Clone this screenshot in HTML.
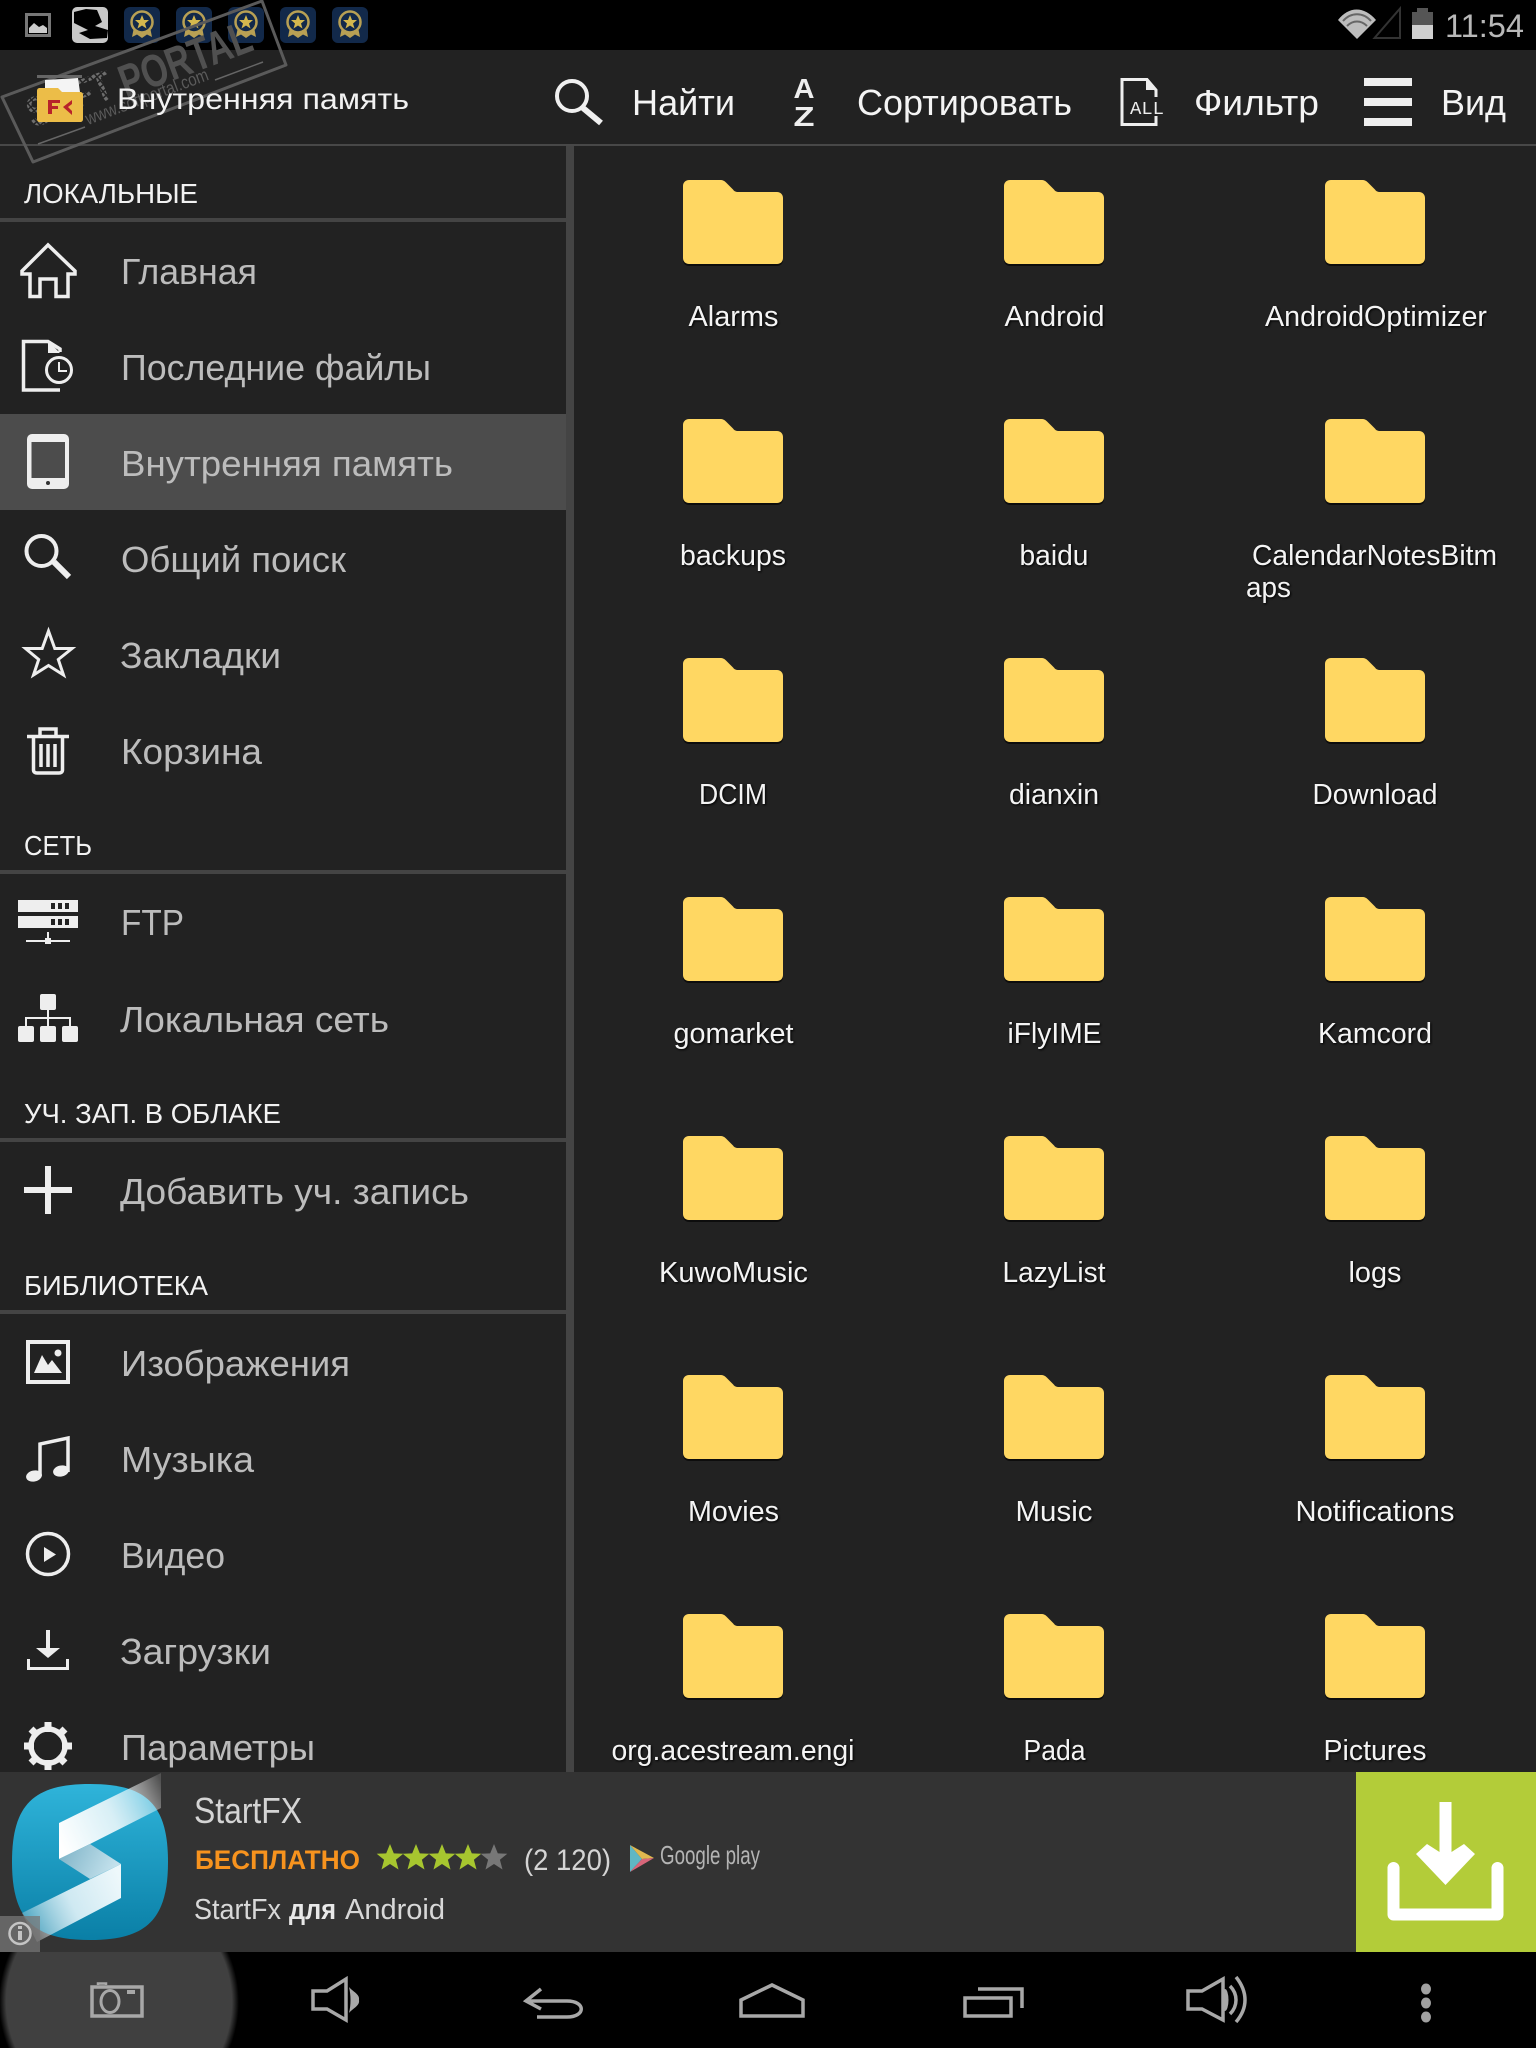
<!DOCTYPE html>
<html lang="ru">
<head>
<meta charset="utf-8">
<title>File Commander</title>
<style>
html,body{margin:0;padding:0;background:#222;width:1536px;height:2048px;overflow:hidden}
svg{display:block;position:absolute;left:0;top:0}
text{font-family:"Liberation Sans",sans-serif}
.side{font-size:36px;fill:#bcbcbc}
.sec{font-size:28px;fill:#f2f2f2}
.tb{font-size:36px;fill:#f4f4f4}
.fl{font-size:29px;fill:#f4f4f4;text-anchor:middle}
.ic{fill:none;stroke:#eee;stroke-width:4}
.nav{fill:none;stroke:#a8a8a8;stroke-width:3.500}
</style>
</head>
<body>
<svg width="1536" height="2048" viewBox="0 0 1536 2048" xmlns="http://www.w3.org/2000/svg">
<defs>
<g id="folder">
<path d="M6 1H37C40 1 41.500 2 43 3.500L50 10.500C51 11.800 52 13 55 13H94C97.500 13 100 15.500 100 19V79C100 82.500 97.500 85 94 85H6C2.500 85 0 82.500 0 79V7C0 3.500 2.500 1 6 1Z" fill="#000" opacity=".6" transform="translate(0,1)"/>
<path d="M6 0H37C40 0 41.500 1 43 2.500L50 9.500C51 10.800 52 12 55 12H94C97.500 12 100 14.500 100 18V78C100 81.500 97.500 84 94 84H6C2.500 84 0 81.500 0 78V6C0 2.500 2.500 0 6 0Z" fill="#ffd762"/>
</g>
<g id="badge">
<rect x="0" y="0" width="36" height="36" rx="6" fill="#12294a"/>
<path d="M10 20L8 30 13 27.500 18 31 23 27.500 28 30 26 20Z" fill="#b8a054"/>
<circle cx="18" cy="15" r="10.500" fill="#12294a" stroke="#b8a054" stroke-width="2.500"/>
<path d="M18 8L20 13H25L21 16.500 22.500 21.500 18 18.500 13.500 21.500 15 16.500 11 13H16Z" fill="#d4b84e"/>
</g>
<path id="star" d="M0-14L3.800-4.600 13.300-4.300 5.900 1.800 8.500 11.500 0 6 -8.500 11.500 -5.900 1.800 -13.300-4.300 -3.800-4.600Z"/>
<linearGradient id="blob" x1="0" y1="0" x2="0" y2="1"><stop offset="0" stop-color="#2fb4da"/><stop offset="1" stop-color="#0a7fa6"/></linearGradient>
<linearGradient id="b1" x1="59" y1="1840" x2="165" y2="1790" gradientUnits="userSpaceOnUse"><stop offset="0" stop-color="#fff"/><stop offset=".5" stop-color="#d8eff6"/><stop offset=".85" stop-color="#fff" stop-opacity=".42"/><stop offset="1" stop-color="#fff" stop-opacity=".15"/></linearGradient>
<linearGradient id="b2" x1="60" y1="1850" x2="110" y2="1875" gradientUnits="userSpaceOnUse"><stop offset="0" stop-color="#7fb4c8"/><stop offset="1" stop-color="#c3e1ec"/></linearGradient>
<linearGradient id="b3" x1="121" y1="1880" x2="22" y2="1925" gradientUnits="userSpaceOnUse"><stop offset="0" stop-color="#eef8fb"/><stop offset=".5" stop-color="#cfe9f2"/><stop offset="1" stop-color="#fff" stop-opacity=".2"/></linearGradient>
<pattern id="dots" width="5" height="5" patternUnits="userSpaceOnUse" patternTransform="rotate(-20)"><rect width="3.500" height="3.500" fill="#6e6e6e"/></pattern>
<radialGradient id="halo"><stop offset=".94" stop-color="#404040"/><stop offset="1" stop-color="#404040" stop-opacity="0"/></radialGradient>
</defs>

<!-- base -->
<rect width="1536" height="2048" fill="#222"/>
<rect width="1536" height="50" fill="#000"/>
<rect y="144" width="1536" height="2" fill="#484848"/>

<!-- status bar left -->
<g>
<rect x="26.500" y="14.500" width="23" height="21" fill="none" stroke="#777" stroke-width="3"/>
<path d="M29 33V28L34 23 39 27 43 25 47 28V33Z" fill="#ccc"/>
<rect x="72" y="7" width="36" height="36" rx="5" fill="#c8c8c8"/>
<path d="M74 12L86 9 97 10 102 22 95 26 108 30 107 38 90 39 79 33 88 30 80 26 74 23Z" fill="#000"/>
<use href="#badge" x="124" y="7"/>
<use href="#badge" x="176" y="7"/>
<use href="#badge" x="228" y="7"/>
<use href="#badge" x="280" y="7"/>
<use href="#badge" x="332" y="7"/>
</g>

<!-- status bar right -->
<path d="M1338 20C1349 6 1364 6 1376 20L1357 39Z" fill="#bdbdbd"/>
<path d="M1343 21C1351 12 1363 12 1371 21M1347 26C1353 20 1361 20 1367 26" fill="none" stroke="#666" stroke-width="2"/>
<path d="M1374.500 38L1400 8.500V38Z" fill="none" stroke="#333" stroke-width="2"/>
<rect x="1412" y="12" width="21" height="13" fill="#555"/>
<rect x="1417" y="8" width="11" height="4" fill="#555"/>
<rect x="1412" y="25" width="21" height="14" fill="#cfcfcf"/>
<text x="1445" y="37" font-size="32" fill="#b8b8b8" textLength="79" lengthAdjust="spacingAndGlyphs">11:54</text>

<!-- watermark -->
<g>
<path d="M2 97L262 1 286 65 33 162Z" fill="none" stroke="#5a5a5a" stroke-width="3" stroke-linejoin="round"/>
<text transform="rotate(-20.500 126 98)" x="126" y="98" font-size="46" font-weight="bold" fill="#505050" textLength="138" lengthAdjust="spacingAndGlyphs">PORTAL</text>
<text transform="rotate(-20.500 33 128)" x="33" y="128" font-size="42" font-weight="bold" fill="url(#dots)" textLength="89" lengthAdjust="spacingAndGlyphs">SOFT</text>
<text transform="rotate(-20.500 88 125)" x="88" y="125" font-size="18" fill="#5a5a5a" textLength="130" lengthAdjust="spacingAndGlyphs">www.softportal.com</text>
<path d="M38 144L85 127M215 80L263 62" stroke="#666" stroke-width="1.500" fill="none"/>
</g>

<!-- toolbar -->
<text x="117" y="109" font-size="30" fill="#f2f2f2" textLength="292" lengthAdjust="spacingAndGlyphs">Внутренняя память</text>
<circle cx="572" cy="96" r="15" fill="none" stroke="#f0f0f0" stroke-width="4"/>
<path d="M583 108L601 123" stroke="#f0f0f0" stroke-width="6" fill="none"/>
<text class="tb" x="632" y="115" textLength="103" lengthAdjust="spacingAndGlyphs">Найти</text>
<text x="804" y="98" font-size="28" font-weight="bold" fill="#eee" text-anchor="middle" textLength="21" lengthAdjust="spacingAndGlyphs">A</text>
<text x="804" y="126" font-size="28" font-weight="bold" fill="#eee" text-anchor="middle" textLength="21" lengthAdjust="spacingAndGlyphs">Z</text>
<text class="tb" x="857" y="115" textLength="215" lengthAdjust="spacingAndGlyphs">Сортировать</text>
<path d="M1156 116V124.500H1122V79.500H1147L1156 90V97" fill="none" stroke="#eee" stroke-width="3"/>
<path d="M1146 79.500V90H1156Z" fill="#eee"/>
<text x="1130" y="114" font-size="18" fill="#eee" textLength="34" lengthAdjust="spacingAndGlyphs" style="font-family:'Liberation Mono',monospace">ALL</text>
<text class="tb" x="1194" y="115" textLength="125" lengthAdjust="spacingAndGlyphs">Фильтр</text>
<rect x="1364" y="78" width="48" height="8" fill="#eee"/>
<rect x="1364" y="98" width="48" height="8" fill="#eee"/>
<rect x="1364" y="118" width="48" height="8" fill="#eee"/>
<text class="tb" x="1441" y="115" textLength="65" lengthAdjust="spacingAndGlyphs">Вид</text>

<!-- FK icon -->
<rect x="37" y="75" width="45" height="3" fill="#666"/>
<path d="M45 92V80L78 78 80 92Z" fill="#f4f4f4"/>
<path d="M40 88H58L62 92H80C82 92 83 93 83 95V119C83 121 82 122 80 122H40C38 122 37 121 37 119V91C37 89 38 88 40 88Z" fill="#ecbd48"/>
<path d="M48 100H60V103H52V106H58V109H52V114H48Z" fill="#b8232a"/>
<path d="M72 100L63 107 72 115V111L68 107 72 104Z" fill="#b8232a"/>

<!-- sidebar -->
<rect x="566" y="146" width="8" height="1626" fill="#444"/>
<text class="sec" x="24" y="203" textLength="174" lengthAdjust="spacingAndGlyphs">ЛОКАЛЬНЫЕ</text>
<rect y="218" width="566" height="4" fill="#444"/>
<rect y="414" width="566" height="96" fill="#4c4c4c"/>

<text class="side" x="121" y="284" textLength="136" lengthAdjust="spacingAndGlyphs">Главная</text>
<text class="side" x="121" y="380" textLength="310" lengthAdjust="spacingAndGlyphs">Последние файлы</text>
<text class="side" x="121" y="476" textLength="332" lengthAdjust="spacingAndGlyphs">Внутренняя память</text>
<text class="side" x="121" y="572" textLength="225" lengthAdjust="spacingAndGlyphs">Общий поиск</text>
<text class="side" x="120" y="668" textLength="161" lengthAdjust="spacingAndGlyphs">Закладки</text>
<text class="side" x="121" y="764" textLength="141" lengthAdjust="spacingAndGlyphs">Корзина</text>

<text class="sec" x="24" y="855" textLength="68" lengthAdjust="spacingAndGlyphs">СЕТЬ</text>
<rect y="870" width="566" height="4" fill="#444"/>
<text class="side" x="121" y="935" textLength="63" lengthAdjust="spacingAndGlyphs">FTP</text>
<text class="side" x="120" y="1032" textLength="269" lengthAdjust="spacingAndGlyphs">Локальная сеть</text>

<text class="sec" x="24" y="1123" textLength="257" lengthAdjust="spacingAndGlyphs">УЧ. ЗАП. В ОБЛАКЕ</text>
<rect y="1138" width="566" height="4" fill="#444"/>
<text class="side" x="120" y="1204" textLength="349" lengthAdjust="spacingAndGlyphs">Добавить уч. запись</text>

<text class="sec" x="24" y="1295" textLength="184" lengthAdjust="spacingAndGlyphs">БИБЛИОТЕКА</text>
<rect y="1310" width="566" height="4" fill="#444"/>
<text class="side" x="121" y="1376" textLength="229" lengthAdjust="spacingAndGlyphs">Изображения</text>
<text class="side" x="121" y="1472" textLength="133" lengthAdjust="spacingAndGlyphs">Музыка</text>
<text class="side" x="121" y="1568" textLength="104" lengthAdjust="spacingAndGlyphs">Видео</text>
<text class="side" x="120" y="1664" textLength="151" lengthAdjust="spacingAndGlyphs">Загрузки</text>
<text class="side" x="121" y="1760" textLength="194" lengthAdjust="spacingAndGlyphs">Параметры</text>

<!-- sidebar icons -->
<path class="ic" d="M48 245L22 271V274H30V296.500H40V279H56V296.500H68V274H75V271Z" style="stroke-width:3.500"/>
<path class="ic" d="M60 352V349L48 341.500H23.500V390H60" style="stroke-width:3.500"/>
<path d="M48 341V353H60Z" fill="#eee"/>
<circle cx="59" cy="370" r="12.500" fill="#222" stroke="#eee" stroke-width="3"/>
<path d="M59 362V371H67" fill="none" stroke="#eee" stroke-width="2"/>
<rect x="27" y="434" width="42" height="55" rx="5" fill="#eee"/>
<rect x="31.500" y="442" width="33.500" height="36" fill="#4c4c4c"/>
<circle cx="48" cy="483" r="2" fill="#333"/>
<circle cx="41.500" cy="551" r="15" class="ic"/>
<path d="M54 562L69 577" stroke="#eee" stroke-width="6" fill="none"/>
<path d="M48.500 631L54.800 648.500H72L58.300 659.500 63.500 675 48.500 665.500 33.500 675 38.700 659.500 25.500 648.500H42.200Z" class="ic" style="stroke-width:3"/>
<path d="M27 736.500H69M33.500 738V770C33.500 772 35 773 37 773H59C61 773 62.500 772 62.500 770V738M40 735V729H56V735" class="ic" style="stroke-width:3.500"/>
<path d="M41 744V767M48 744V767M55 744V767" class="ic" style="stroke-width:3.500"/>

<rect x="18" y="900" width="60" height="12" fill="#eee"/>
<rect x="18" y="916" width="60" height="12" fill="#eee"/>
<path d="M51 903v6h4v-6zM58 903v6h4v-6zM65 903v6h4v-6zM51 919v6h4v-6zM58 919v6h4v-6zM65 919v6h4v-6z" fill="#222"/>
<path d="M48 932V942M26 941H70" stroke="#eee" stroke-width="2" fill="none"/>
<rect x="45" y="938" width="6" height="6" fill="#eee"/>

<rect x="40" y="994" width="16" height="16" rx="2" fill="#eee"/>
<rect x="18" y="1026" width="16" height="16" rx="2" fill="#eee"/>
<rect x="40" y="1026" width="16" height="16" rx="2" fill="#eee"/>
<rect x="62" y="1026" width="16" height="16" rx="2" fill="#eee"/>
<path d="M48 1010V1026M26 1026V1018H70V1026" fill="none" stroke="#eee" stroke-width="2"/>

<rect x="45" y="1166" width="6" height="48" fill="#eee"/>
<rect x="24" y="1187" width="48" height="6" fill="#eee"/>

<rect x="28" y="1342" width="40" height="40" fill="none" stroke="#eee" stroke-width="4"/>
<path d="M34 1373L42 1355 48 1365 52 1360 62 1373Z" fill="#eee"/>
<circle cx="58" cy="1353" r="3.500" fill="#eee"/>

<path d="M40 1476V1444L68 1438V1472" fill="none" stroke="#eee" stroke-width="3.500"/>
<ellipse cx="34" cy="1476" rx="8" ry="5.500" fill="#eee" transform="rotate(-12 34 1476)"/>
<ellipse cx="61" cy="1471" rx="8" ry="5.500" fill="#eee" transform="rotate(-12 61 1471)"/>

<circle cx="48" cy="1554" r="20.500" fill="none" stroke="#eee" stroke-width="3.500"/>
<path d="M44 1547L56 1554.500 44 1562Z" fill="#eee"/>

<path d="M48 1630V1650" stroke="#eee" stroke-width="4" fill="none"/>
<path d="M36 1648H60L48 1658Z" fill="#eee"/>
<path d="M28.500 1659V1668.500H67.500V1659" fill="none" stroke="#eee" stroke-width="3"/>

<circle cx="48" cy="1746" r="17" fill="none" stroke="#eee" stroke-width="5.500"/>
<g stroke="#eee" stroke-width="7" fill="none">
<path d="M48 1722V1732M48 1760V1770M24 1746H34M62 1746H72M31 1729L38 1736M58 1756L65 1763M65 1729L58 1736M38 1756L31 1763"/>
</g>

<!-- folders -->
<use href="#folder" x="683" y="180"/><use href="#folder" x="1004" y="180"/><use href="#folder" x="1325" y="180"/>
<use href="#folder" x="683" y="419"/><use href="#folder" x="1004" y="419"/><use href="#folder" x="1325" y="419"/>
<use href="#folder" x="683" y="658"/><use href="#folder" x="1004" y="658"/><use href="#folder" x="1325" y="658"/>
<use href="#folder" x="683" y="897"/><use href="#folder" x="1004" y="897"/><use href="#folder" x="1325" y="897"/>
<use href="#folder" x="683" y="1136"/><use href="#folder" x="1004" y="1136"/><use href="#folder" x="1325" y="1136"/>
<use href="#folder" x="683" y="1375"/><use href="#folder" x="1004" y="1375"/><use href="#folder" x="1325" y="1375"/>
<use href="#folder" x="683" y="1614"/><use href="#folder" x="1004" y="1614"/><use href="#folder" x="1325" y="1614"/>

<g style="filter:drop-shadow(1px 1.500px 1px #000)">
<text class="fl" x="733.500" y="326" textLength="90" lengthAdjust="spacingAndGlyphs">Alarms</text>
<text class="fl" x="1054.500" y="326" textLength="100" lengthAdjust="spacingAndGlyphs">Android</text>
<text class="fl" x="1376" y="326" textLength="222" lengthAdjust="spacingAndGlyphs">AndroidOptimizer</text>
<text class="fl" x="733" y="565" textLength="106" lengthAdjust="spacingAndGlyphs">backups</text>
<text class="fl" x="1054" y="565" textLength="69" lengthAdjust="spacingAndGlyphs">baidu</text>
<text class="fl" x="1374.500" y="565" textLength="245" lengthAdjust="spacingAndGlyphs">CalendarNotesBitm</text>
<text class="fl" x="1268.500" y="597" textLength="45" lengthAdjust="spacingAndGlyphs">aps</text>
<text class="fl" x="733" y="804" textLength="68" lengthAdjust="spacingAndGlyphs">DCIM</text>
<text class="fl" x="1054" y="804" textLength="90" lengthAdjust="spacingAndGlyphs">dianxin</text>
<text class="fl" x="1375" y="804" textLength="125" lengthAdjust="spacingAndGlyphs">Download</text>
<text class="fl" x="733.500" y="1043" textLength="120" lengthAdjust="spacingAndGlyphs">gomarket</text>
<text class="fl" x="1054.500" y="1043" textLength="94" lengthAdjust="spacingAndGlyphs">iFlyIME</text>
<text class="fl" x="1375" y="1043" textLength="114" lengthAdjust="spacingAndGlyphs">Kamcord</text>
<text class="fl" x="733.500" y="1282" textLength="149" lengthAdjust="spacingAndGlyphs">KuwoMusic</text>
<text class="fl" x="1054" y="1282" textLength="103" lengthAdjust="spacingAndGlyphs">LazyList</text>
<text class="fl" x="1375" y="1282" textLength="53" lengthAdjust="spacingAndGlyphs">logs</text>
<text class="fl" x="733.500" y="1521" textLength="91" lengthAdjust="spacingAndGlyphs">Movies</text>
<text class="fl" x="1054" y="1521" textLength="77" lengthAdjust="spacingAndGlyphs">Music</text>
<text class="fl" x="1375" y="1521" textLength="159" lengthAdjust="spacingAndGlyphs">Notifications</text>
<text class="fl" x="733" y="1760" textLength="243" lengthAdjust="spacingAndGlyphs">org.acestream.engi</text>
<text class="fl" x="1054.500" y="1760" textLength="62" lengthAdjust="spacingAndGlyphs">Pada</text>
<text class="fl" x="1375" y="1760" textLength="103" lengthAdjust="spacingAndGlyphs">Pictures</text>
</g>

<!-- nav bar -->
<rect y="1952" width="1536" height="96" fill="#000"/>
<circle cx="119" cy="2002" r="120" fill="url(#halo)"/>
<rect x="92" y="1987" width="50" height="29" fill="none" stroke="#a8a8a8" stroke-width="3.500"/>
<ellipse cx="110" cy="2001.500" rx="9" ry="11" fill="none" stroke="#a8a8a8" stroke-width="3"/>
<path d="M98 1985V1983.500H106V1985" fill="none" stroke="#a8a8a8" stroke-width="2.500"/>
<rect x="127" y="1990" width="8" height="4" fill="#a8a8a8"/>
<path class="nav" d="M313 1991V2009H327L346 2020V1979L327 1991Z"/>
<path d="M349 1987C353 1992 360 1994 359 2000C360 2006 353 2008 349 2013C351 2005 351 1995 349 1987Z" fill="#a8a8a8"/>
<path class="nav" d="M541 1989L526 2001 541 2009M526 2001H567C586 2001 586 2017 567 2017H537"/>
<path class="nav" d="M741 2016V2000L772 1985 803 2000V2016Z"/>
<path class="nav" d="M965 1998H1011V2016H965Z"/>
<path class="nav" d="M978 1989H1022V2008"/>
<path class="nav" d="M1188 1991V2009H1202L1223 2020V1979L1202 1991Z"/>
<ellipse cx="1225" cy="2000" rx="3.500" ry="11" fill="#a8a8a8"/>
<path d="M1230 1986C1238 1994 1238 2006 1230 2014M1236 1977C1248 1992 1248 2008 1236 2022" fill="none" stroke="#a8a8a8" stroke-width="3.500"/>
<ellipse cx="1426" cy="1989" rx="5" ry="5.500" fill="#a0a0a0"/>
<ellipse cx="1426" cy="2003" rx="5" ry="5.500" fill="#a0a0a0"/>
<ellipse cx="1426" cy="2017" rx="5" ry="5.500" fill="#a0a0a0"/>

<!-- ad banner -->
<rect y="1772" width="1536" height="180" fill="#333"/>
<rect x="1356" y="1772" width="180" height="180" fill="#b3cc39"/>
<path d="M1439.500 1802H1451.500V1852L1464 1844 1475 1854 1445.500 1885 1416 1854 1427 1844 1439.500 1852Z" fill="#fff"/>
<path d="M1393.500 1868V1914.500H1497.500V1868" fill="none" stroke="#fff" stroke-width="12" stroke-linejoin="round" stroke-linecap="round"/>

<path d="M90 1784C146 1784 168 1804 168 1862C168 1920 146 1940 90 1940C34 1940 12 1920 12 1862C12 1804 34 1784 90 1784Z" fill="url(#blob)"/>
<path d="M59 1823L161 1773V1808L90 1844 59 1859Z" fill="url(#b1)"/>
<path d="M59 1859L90 1844 121 1864 90 1879Z" fill="url(#b2)"/>
<path d="M121 1864V1898L37 1942 22 1913Z" fill="url(#b3)"/>
<rect x="0" y="1916" width="40" height="36" fill="#777" opacity=".75"/>
<circle cx="20" cy="1933.500" r="10.500" fill="none" stroke="#c4c4c4" stroke-width="2.500"/>
<rect x="18" y="1931" width="4" height="9" fill="#c4c4c4"/>
<rect x="18" y="1926" width="4" height="3" fill="#c4c4c4"/>

<text x="194" y="1823" font-size="36" fill="#d4d4d4" textLength="108" lengthAdjust="spacingAndGlyphs">StartFX</text>
<text x="195" y="1869" font-size="27" font-weight="bold" fill="#f7931e" textLength="165" lengthAdjust="spacingAndGlyphs">БЕСПЛАТНО</text>
<g fill="#a7c62f">
<use href="#star" x="390" y="1858"/><use href="#star" x="416" y="1858"/><use href="#star" x="442" y="1858"/><use href="#star" x="468" y="1858"/>
</g>
<use href="#star" x="494" y="1858" fill="#777"/>
<text x="524" y="1870" font-size="30" fill="#d4d4d4" textLength="87" lengthAdjust="spacingAndGlyphs">(2 120)</text>
<path d="M630 1845L642 1859 630 1872Z" fill="#5fb7c4"/>
<path d="M630 1845L654 1858 642 1859Z" fill="#e0b84f"/>
<path d="M630 1872L654 1858 642 1859Z" fill="#d8667a"/>
<text x="660" y="1864" font-size="26" fill="#b4b4b4" textLength="100" lengthAdjust="spacingAndGlyphs">Google play</text>
<text x="194" y="1919" font-size="29" fill="#d8d8d8" textLength="87" lengthAdjust="spacingAndGlyphs">StartFx</text>
<text x="289" y="1919" font-size="29" font-weight="bold" fill="#e8e8e8" textLength="47" lengthAdjust="spacingAndGlyphs">для</text>
<text x="345" y="1919" font-size="29" fill="#d8d8d8" textLength="100" lengthAdjust="spacingAndGlyphs">Android</text>
</svg>
</body>
</html>
